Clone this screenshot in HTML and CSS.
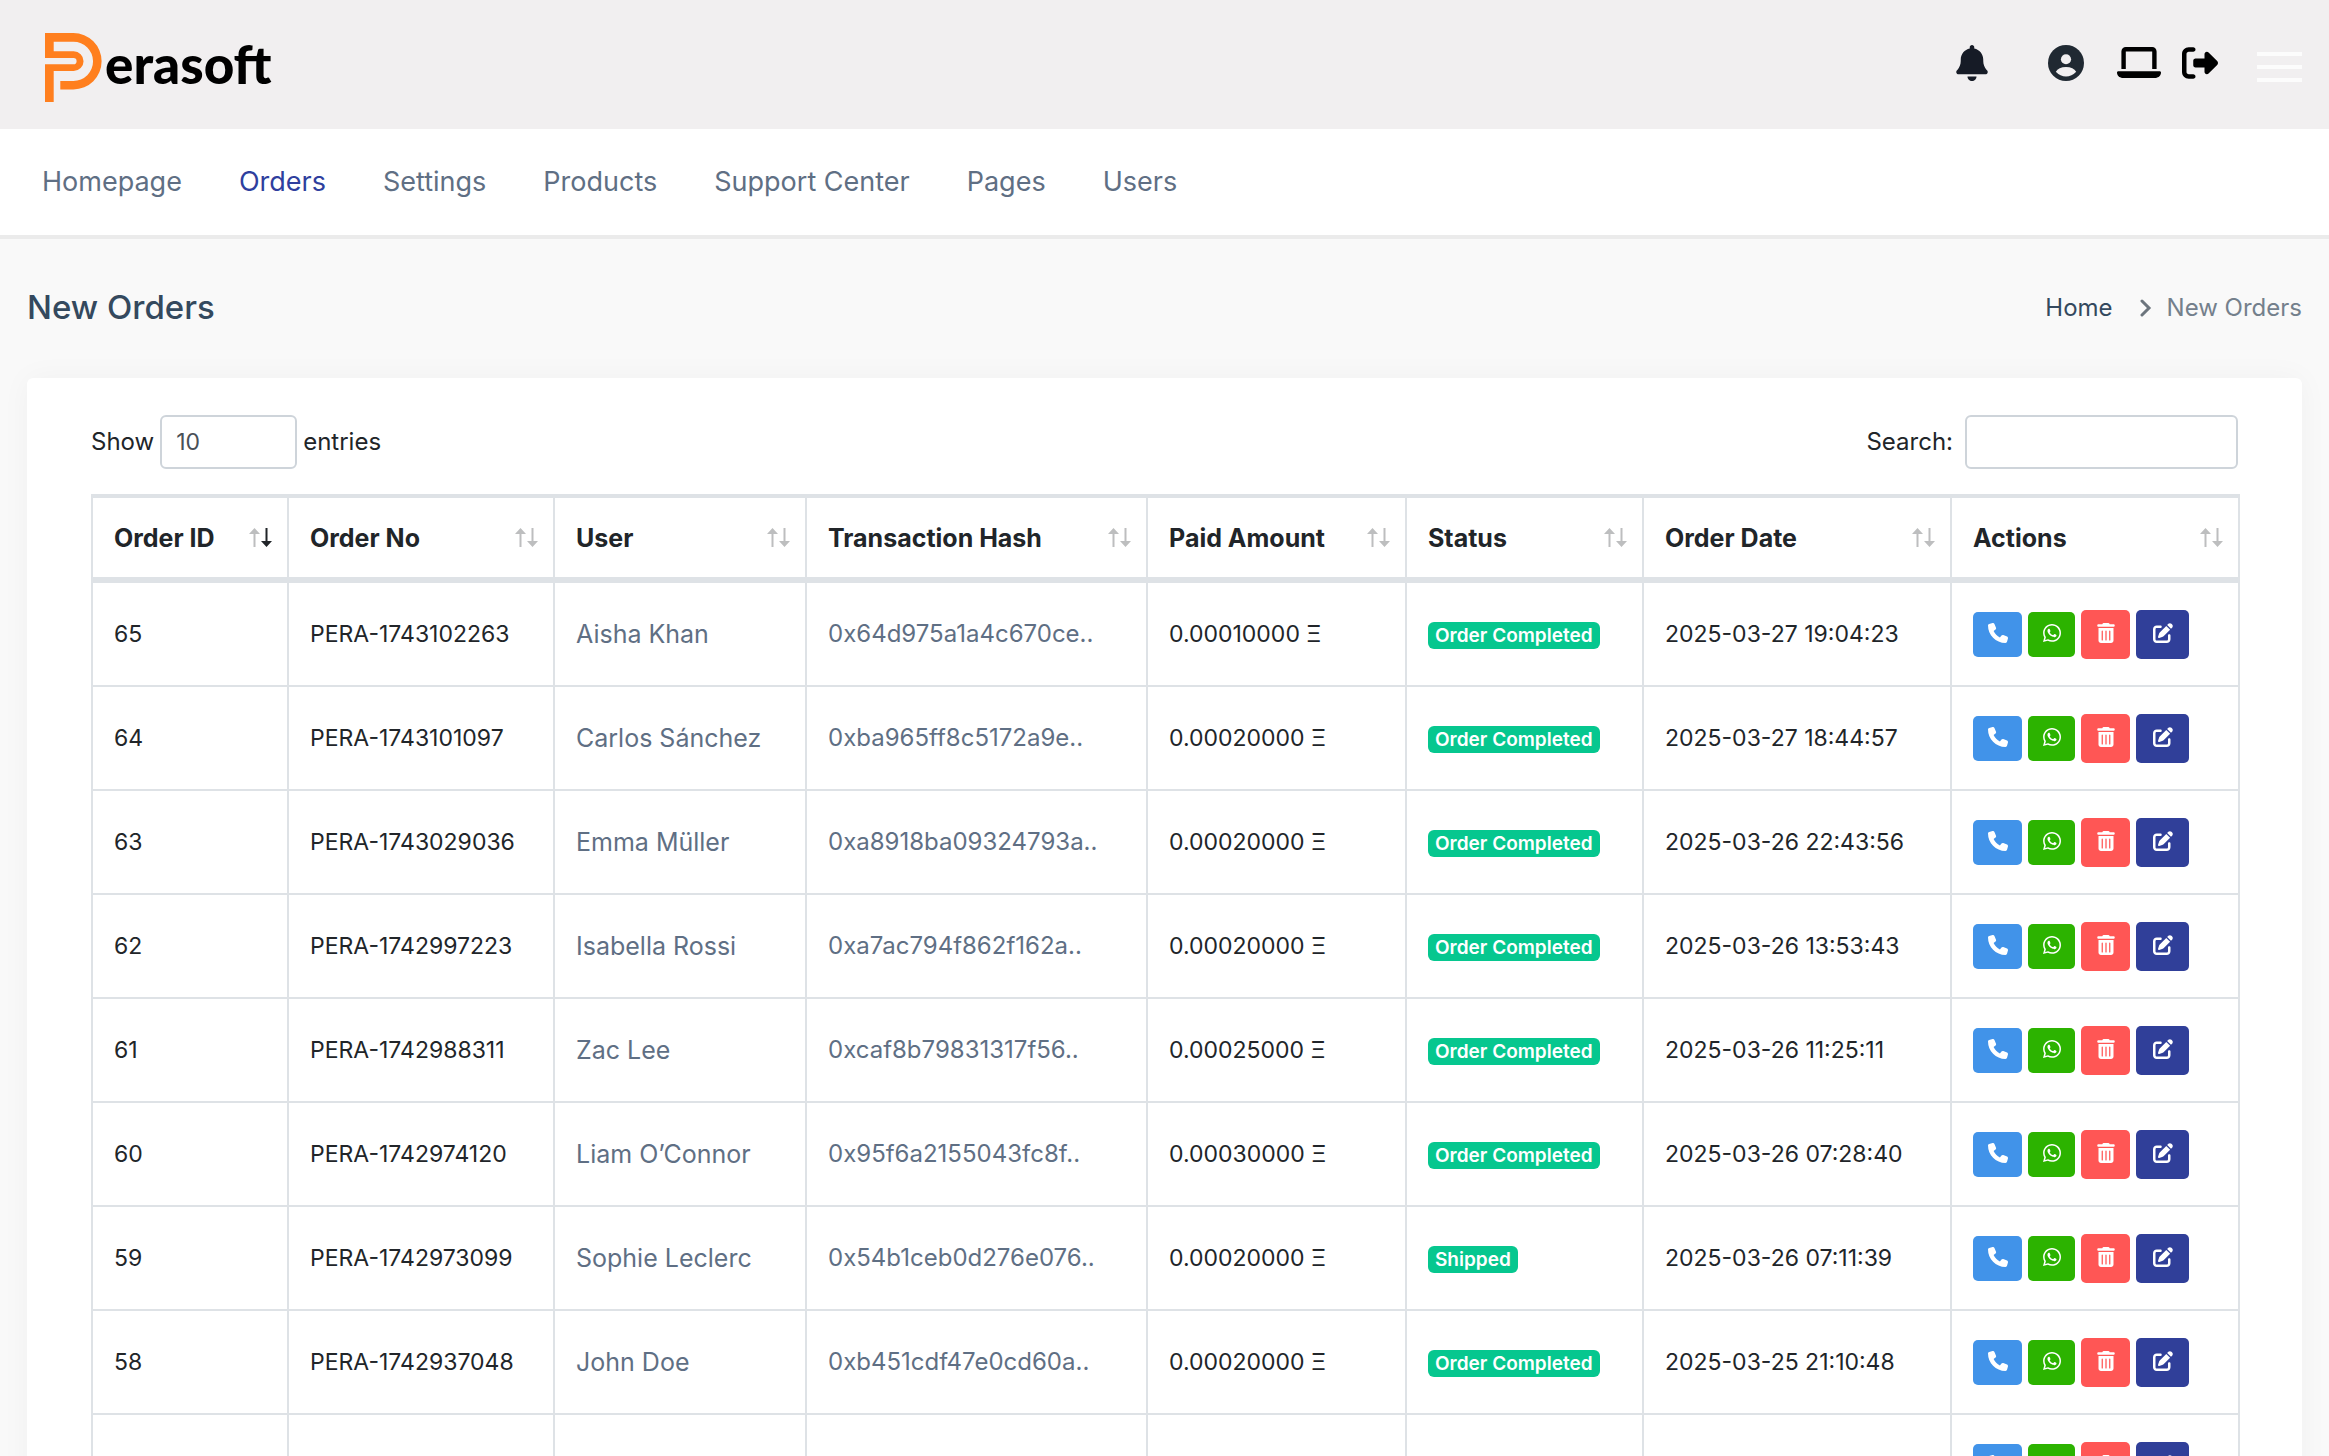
FILE: index.html
```html
<!DOCTYPE html>
<html lang="en">
<head>
    <meta charset="UTF-8">
    <meta name="viewport" content="width=device-width, initial-scale=1.0">
    <title>Perasoft - New Orders</title>
    <link rel="stylesheet" href="styles.css">
</head>
<body>

    <svg class="sprite" aria-hidden="true">
        <symbol id="i-phone" viewBox="0 0 512 512"><path d="M164.9 24.6c-7.7-18.6-28-28.5-47.4-23.2l-88 24C12.1 30.2 0 46 0 64C0 311.4 200.6 512 448 512c18 0 33.8-12.1 38.6-29.5l24-88c5.3-19.4-4.6-39.7-23.2-47.4l-96-40c-16.3-6.8-35.2-2.1-46.3 11.6L304.7 368C234.3 334.7 177.3 277.7 144 207.3L193.3 167c13.7-11.2 18.4-30 11.6-46.3l-40-96z"/></symbol>
        <symbol id="i-whatsapp" viewBox="0 32 448 448"><path d="M380.9 97.1C339 55.1 283.2 32 223.9 32c-122.4 0-222 99.6-222 222 0 39.1 10.2 77.3 29.6 111L0 480l117.7-30.9c32.4 17.7 68.9 27 106.1 27h.1c122.3 0 224.1-99.6 224.1-222 0-59.3-25.2-115-67.1-157zm-157 341.6c-33.2 0-65.7-8.9-94-25.7l-6.7-4-69.8 18.3L72 359.2l-4.4-7c-18.5-29.4-28.2-63.3-28.2-98.2 0-101.7 82.8-184.5 184.6-184.5 49.3 0 95.6 19.2 130.4 54.1 34.8 34.9 56.2 81.2 56.1 130.5 0 101.8-84.9 184.6-186.6 184.6zm101.2-138.2c-5.5-2.8-32.8-16.2-37.9-18-5.1-1.9-8.8-2.8-12.5 2.8-3.7 5.6-14.3 18-17.6 21.8-3.2 3.7-6.5 4.2-12 1.4-32.6-16.3-54-29.1-75.5-66-5.7-9.8 5.7-9.1 16.3-30.3 1.8-3.7.9-6.9-.5-9.7-1.4-2.8-12.5-30.1-17.1-41.2-4.5-10.8-9.1-9.3-12.5-9.5-3.2-.2-6.9-.2-10.6-.2-3.7 0-9.7 1.4-14.8 6.9-5.1 5.6-19.4 19-19.4 46.3 0 27.3 19.9 53.7 22.6 57.4 2.8 3.7 39.1 59.7 94.8 83.8 35.2 15.2 49 16.5 66.6 13.9 10.7-1.6 32.8-13.4 37.4-26.4 4.6-13 4.6-24.1 3.2-26.4-1.3-2.5-5-3.9-10.5-6.6z"/></symbol>
        <symbol id="i-trash" viewBox="0 0 448 512"><path d="M135.2 17.7L128 32H32C14.3 32 0 46.3 0 64S14.3 96 32 96H416c17.7 0 32-14.3 32-32s-14.3-32-32-32H320l-7.2-14.3C307.4 6.8 296.3 0 284.2 0H163.8c-12.1 0-23.2 6.8-28.6 17.7zM416 128H32V448c0 35.3 28.7 64 64 64H352c35.3 0 64-28.7 64-64V128zM144 208V432c0 8.8-7.2 16-16 16s-16-7.2-16-16V208c0-8.8 7.2-16 16-16s16 7.2 16 16zm96 0V432c0 8.8-7.2 16-16 16s-16-7.2-16-16V208c0-8.8 7.2-16 16-16s16 7.2 16 16zm96 0V432c0 8.8-7.2 16-16 16s-16-7.2-16-16V208c0-8.8 7.2-16 16-16s16 7.2 16 16z"/></symbol>
        <symbol id="i-edit" viewBox="0 0 512 512"><path d="M471.6 21.7c-21.9-21.9-57.3-21.9-79.2 0L362.3 51.7l97.9 97.9 30.1-30.1c21.9-21.9 21.9-57.3 0-79.2L471.6 21.7zm-299.2 220c-6.1 6.1-10.8 13.6-13.5 21.9l-29.6 88.8c-2.9 8.6-.6 18.1 5.8 24.6s15.9 8.7 24.6 5.8l88.8-29.6c8.2-2.7 15.7-7.4 21.9-13.5L437.7 172.3 339.7 74.3 172.4 241.7zM96 64C43 64 0 107 0 160V416c0 53 43 96 96 96H352c53 0 96-43 96-96V320c0-17.7-14.3-32-32-32s-32 14.3-32 32v96c0 17.7-14.3 32-32 32H96c-17.7 0-32-14.3-32-32V160c0-17.7 14.3-32 32-32h96c17.7 0 32-14.3 32-32s-14.3-32-32-32H96z"/></symbol>
        <symbol id="i-sort" viewBox="0 0 23 19">
            <path class="asc" d="M5.5 0L11 6H6.5V19H4.5V6H0z"/>
            <path class="desc" d="M17.5 19L12 13H16.5V0H18.5V13H23z"/>
        </symbol>
    </svg>

    <header class="header">
        <a class="logo" href="#" aria-label="Perasoft">
            <svg class="logo-mark" viewBox="0 0 57 69"><path d="M0 0H28.400A28.200 28.200 0 0 1 28.400 56.400H15.300V48H28.400A19.600 19.600 0 0 0 28.400 8.700H8.700V18.300H28.700A9.800 9.800 0 0 1 28.700 38H8.700V69H0V31.300H28.500A3.100 3.100 0 0 0 28.500 25.100H0z"/></svg>
            <span class="logo-text">erasoft</span>
        </a>
        <div class="header-actions">
            <a class="bell" href="#" aria-label="Notifications">
                <svg width="32" height="36" viewBox="0 0 448 512"><path d="M224 0c-17.700 0-32 14.300-32 32V51.200C119 66 64 130.600 64 208v18.800c0 47-17.300 92.400-48.500 127.600l-7.400 8.300c-8.400 9.400-10.400 22.900-5.300 34.400S19.400 416 32 416H416c12.600 0 24-7.400 29.200-18.900s3.100-25-5.300-34.400l-7.400-8.300C401.300 319.200 384 273.900 384 226.800V208c0-77.400-55-142-128-156.800V32c0-17.700-14.300-32-32-32zm45.300 493.300c12-12 18.700-28.300 18.700-45.300H224 160c0 17 6.700 33.300 18.700 45.300s28.300 18.700 45.300 18.700s33.300-6.700 45.300-18.700z"/></svg>
            </a>
            <a class="account" href="#" aria-label="Account">
                <svg width="36" height="36" viewBox="0 0 106 106"><circle cx="53" cy="53" r="53"/><circle class="cut" cx="53" cy="42" r="15"/><path class="cut" d="M23 79Q31 65 53 65Q75 65 83 79Q70 93 53 93Q36 93 23 79z"/></svg>
            </a>
            <a class="laptop" href="#" aria-label="View site">
                <svg width="44" height="31" viewBox="0 32 640 448"><path d="M128 32C92.700 32 64 60.700 64 96V352h64V96H512V352h64V96c0-35.300-28.700-64-64-64H128zM19.200 384C8.600 384 0 392.600 0 403.200C0 445.600 34.400 480 76.800 480H563.200c42.400 0 76.800-34.400 76.800-76.800c0-10.600-8.600-19.200-19.200-19.200H19.200z"/></svg>
            </a>
            <a class="signout" href="#" aria-label="Sign out">
                <svg width="36" height="36" viewBox="0 0 512 512"><path d="M377.900 105.900L500.700 228.700c7.200 7.200 11.300 17.100 11.300 27.300s-4.100 20.100-11.300 27.300L377.900 406.100c-6.400 6.400-15 9.900-24 9.900c-18.700 0-33.900-15.200-33.900-33.900l0-62.100-128 0c-17.700 0-32-14.300-32-32l0-64c0-17.700 14.300-32 32-32l128 0 0-62.100c0-18.700 15.200-33.900 33.900-33.900c9 0 17.600 3.600 24 9.900zM160 96L96 96c-17.700 0-32 14.300-32 32l0 256c0 17.700 14.300 32 32 32l64 0c17.700 0 32 14.300 32 32s-14.300 32-32 32l-64 0c-53 0-96-43-96-96L0 128C0 75 43 32 96 32l64 0c17.700 0 32 14.300 32 32s-14.300 32-32 32z"/></svg>
            </a>
            <button type="button" class="menu-toggle" aria-label="Menu">
                <span></span><span></span><span></span>
            </button>
        </div>
    </header>

    <nav class="navbar">
        <a href="#">Homepage</a>
        <a href="#" class="active">Orders</a>
        <a href="#">Settings</a>
        <a href="#">Products</a>
        <a href="#">Support Center</a>
        <a href="#">Pages</a>
        <a href="#">Users</a>
    </nav>

    <main class="content">
        <div class="page-title">
            <h1>New Orders</h1>
            <div class="breadcrumb">
                <a href="#">Home</a>
                <svg width="12" height="18" viewBox="0 0 12 18"><path d="M2 2l7 7-7 7"/></svg>
                <span>New Orders</span>
            </div>
        </div>

        <div class="card">
            <div class="table-tools">
                <label class="length">Show
                    <select name="length">
                        <option>10</option>
                        <option>25</option>
                        <option>50</option>
                        <option>100</option>
                    </select>
                    entries
                </label>
                <label class="search">Search: <input type="search" name="search"></label>
            </div>

            <table class="orders">
                <colgroup>
                    <col class="col-id">
                    <col class="col-no">
                    <col class="col-user">
                    <col class="col-hash">
                    <col class="col-paid">
                    <col class="col-status">
                    <col class="col-date">
                    <col class="col-actions">
                </colgroup>
                <thead>
                    <tr id="orders-head"></tr>
                </thead>
                <tbody id="orders-body"></tbody>
            </table>
        </div>
    </main>

    <script>
        const columns = ['Order ID', 'Order No', 'User', 'Transaction Hash', 'Paid Amount', 'Status', 'Order Date', 'Actions'];

        const orders = [
            [65, 'PERA-1743102263', 'Aisha Khan', '0x64d975a1a4c670ce..', '0.00010000 Ξ', 'Order Completed', '2025-03-27 19:04:23'],
            [64, 'PERA-1743101097', 'Carlos Sánchez', '0xba965ff8c5172a9e..', '0.00020000 Ξ', 'Order Completed', '2025-03-27 18:44:57'],
            [63, 'PERA-1743029036', 'Emma Müller', '0xa8918ba09324793a..', '0.00020000 Ξ', 'Order Completed', '2025-03-26 22:43:56'],
            [62, 'PERA-1742997223', 'Isabella Rossi', '0xa7ac794f862f162a..', '0.00020000 Ξ', 'Order Completed', '2025-03-26 13:53:43'],
            [61, 'PERA-1742988311', 'Zac Lee', '0xcaf8b79831317f56..', '0.00025000 Ξ', 'Order Completed', '2025-03-26 11:25:11'],
            [60, 'PERA-1742974120', 'Liam O’Connor', '0x95f6a2155043fc8f..', '0.00030000 Ξ', 'Order Completed', '2025-03-26 07:28:40'],
            [59, 'PERA-1742973099', 'Sophie Leclerc', '0x54b1ceb0d276e076..', '0.00020000 Ξ', 'Shipped', '2025-03-26 07:11:39'],
            [58, 'PERA-1742937048', 'John Doe', '0xb451cdf47e0cd60a..', '0.00020000 Ξ', 'Order Completed', '2025-03-25 21:10:48'],
            ['', '', '', '', '', '', '']
        ];

        const icon = name => `<svg class="icon icon-${name}"><use href="#i-${name}"/></svg>`;

        document.getElementById('orders-head').innerHTML = columns.map((title, i) => `
            <th scope="col"${i === 0 ? ' class="sorted"' : ''}>
                <div class="th-inner">${title}${icon('sort')}</div>
            </th>`).join('');

        document.getElementById('orders-body').innerHTML = orders.map(([id, no, user, hash, paid, status, date]) => `
            <tr>
                <td class="num">${id}</td>
                <td class="num">${no}</td>
                <td class="user"><a href="#">${user}</a></td>
                <td><a href="#">${hash}</a></td>
                <td class="num">${paid}</td>
                <td>${status ? `<span class="badge">${status}</span>` : ''}</td>
                <td class="num">${date}</td>
                <td>
                    <div class="actions">
                        <button type="button" class="btn btn-call" aria-label="Call">${icon('phone')}</button>
                        <button type="button" class="btn btn-whatsapp" aria-label="WhatsApp">${icon('whatsapp')}</button>
                        <button type="button" class="btn btn-delete" aria-label="Delete">${icon('trash')}</button>
                        <button type="button" class="btn btn-edit" aria-label="Edit">${icon('edit')}</button>
                    </div>
                </td>
            </tr>`).join('');
    </script>
</body>
</html>
```

FILE: styles.css
```css
* {
    box-sizing: border-box;
}

body {
    font-family: Inter, "Liberation Sans", sans-serif;
    font-size: 24px;
    line-height: 36px;
    color: #212529;
    background-color: #f9f9f9;
    margin: 0;
}

a {
    color: #5f6f84;
    text-decoration: none;
}

.sprite {
    display: none;
}

/* top bar */
.header {
    display: flex;
    align-items: center;
    justify-content: space-between;
    height: 129px;
    padding: 0 27px 0 45px;
    background-color: #f1eff0;
}

.logo {
    display: flex;
    align-items: center;
    gap: 3px;
    padding-top: 6px;
}

.logo-mark {
    width: 57px;
    height: 69px;
    fill: #ff7f1e;
}

.logo-text {
    font-family: Lato, sans-serif;
    font-size: 53px;
    font-weight: 900;
    line-height: 60px;
    padding-bottom: 8px;
    color: #000;
}

.header-actions {
    display: flex;
    align-items: center;
}

.header-actions svg {
    display: block;
}

.bell {
    fill: #161b26;
    margin-right: 60px;
}

.account {
    fill: #202932;
    margin-right: 33px;
}

.account .cut {
    fill: #f1eff0;
}

.laptop {
    margin-right: 21px;
}

.signout {
    margin-right: 39px;
}

.header-actions a {
    padding-bottom: 4px;
}

.menu-toggle {
    display: flex;
    flex-direction: column;
    gap: 9px;
    width: 45px;
    padding: 4px 0 0;
    border: none;
    background: none;
    cursor: pointer;
}

.menu-toggle span {
    height: 4px;
    background-color: #fcfcfc;
}

/* main menu */
.navbar {
    display: flex;
    align-items: center;
    gap: 57px;
    height: 110px;
    padding: 0 42px;
    background-color: #fff;
    border-bottom: 4px solid #ebebeb;
    font-size: 27px;
}

.navbar .active {
    color: #2f3f9e;
}

.content {
    padding: 44px 27px;
}

.page-title {
    display: flex;
    align-items: center;
    justify-content: space-between;
    margin-bottom: 46px;
}

.page-title h1 {
    font-size: 33px;
    font-weight: 500;
    line-height: 49px;
    color: #34495e;
    margin: 0;
}

.breadcrumb {
    display: flex;
    align-items: center;
    color: #74808c;
}

.breadcrumb a {
    color: #34495e;
}

.breadcrumb svg {
    margin: 0 15px 0 27px;
    fill: none;
    stroke: #6c757d;
    stroke-width: 3;
    stroke-linecap: round;
}

.card {
    padding: 37px 64px;
    background-color: #fff;
    border-radius: 6px;
    box-shadow: 0 0 30px rgba(0, 0, 0, 0.04);
}

.table-tools {
    display: flex;
    justify-content: space-between;
    margin-bottom: 25px;
}

.table-tools label {
    display: flex;
    align-items: center;
}

.length {
    gap: 6px;
}

.search {
    gap: 12px;
}

.table-tools select,
.table-tools input {
    height: 54px;
    padding: 0 14px;
    border: 2px solid #ced4da;
    border-radius: 6px;
    background-color: #fff;
    font: inherit;
    font-size: 23px;
    color: #495057;
    appearance: none;
}

.table-tools select {
    width: 137px;
}

.table-tools input {
    width: 273px;
}

/* orders table */
.orders {
    width: 100%;
    table-layout: fixed;
    border-collapse: separate;
    border-spacing: 0;
    border-left: 2px solid #dee2e6;
}

.col-id { width: 196px; }
.col-no { width: 266px; }
.col-user { width: 252px; }
.col-hash { width: 341px; }
.col-paid { width: 259px; }
.col-status { width: 237px; }
.col-date { width: 308px; }
.col-actions { width: 288px; }

.orders th,
.orders td {
    padding: 0 21px;
    border-right: 2px solid #dee2e6;
    text-align: left;
    white-space: nowrap;
}

.orders th {
    height: 89px;
    padding-right: 15px;
    border-top: 4px solid #dee2e6;
    border-bottom: 6px solid #dee2e6;
    font-size: 25px;
    font-weight: 700;
}

.orders td {
    height: 104px;
    border-bottom: 2px solid #dee2e6;
}

.orders .num {
    font-size: 23px;
}

.orders .user {
    font-size: 25px;
}

.th-inner {
    display: flex;
    align-items: center;
    justify-content: space-between;
}

.icon-sort {
    width: 23px;
    height: 19px;
    fill: #bdbebf;
    --desc: #bdbebf;
}

.sorted .icon-sort {
    --desc: #212529;
}

.desc {
    fill: var(--desc);
}

.badge {
    display: inline-block;
    padding: 0 7px;
    border-radius: 6px;
    background-color: #06c78f;
    color: #fff;
    font-size: 19px;
    font-weight: 600;
    line-height: 27px;
    vertical-align: middle;
}

.actions {
    display: flex;
    align-items: center;
    gap: 6px;
}

.btn {
    display: flex;
    align-items: center;
    justify-content: center;
    height: 45px;
    padding: 0 0 3px;
    border: none;
    border-radius: 5px;
    cursor: pointer;
}

.btn .icon {
    width: 20px;
    height: 20px;
    fill: #fff;
}

.btn-call {
    width: 49px;
    background-color: #4193e9;
}

.btn-whatsapp {
    width: 47px;
    background-color: #2cb300;
}

.btn .icon-whatsapp {
    width: 18px;
}

.btn-delete {
    width: 49px;
    height: 49px;
    background-color: #ff5655;
}

.btn-edit {
    width: 53px;
    height: 49px;
    background-color: #303f99;
}
```
